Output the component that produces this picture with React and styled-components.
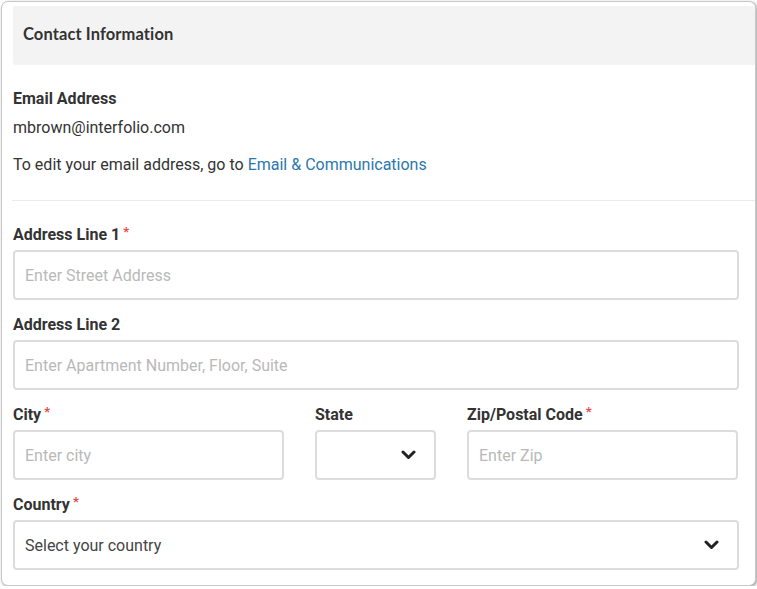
import React from 'react';
import styled, { createGlobalStyle } from 'styled-components';

const GlobalStyle = createGlobalStyle`
    html, body {
        margin: 0;
        padding: 0;
        background: #fff;
        font-family: Roboto, "Liberation Sans", sans-serif;
        color: #333;
    }
    * { box-sizing: border-box; }
`;

const Chevron = () => (
    <svg width="15" height="10" viewBox="0 0 15 10">
        <polyline points="2,2 7.5,7.5 13,2" fill="none" stroke="#222" strokeWidth="3" strokeLinecap="round" strokeLinejoin="round" />
    </svg>
);

const Field = ({ label, required, children, width }) => (
    <FieldWrap width={width}>
        <Label>
            {label}
            {required && <Star>*</Star>}
        </Label>
        {children}
    </FieldWrap>
);

const App = () => {
    return (
        <>
            <GlobalStyle />
            <Card>
                <Header>
                    <Title>Contact Information</Title>
                </Header>
                <EmailBlock>
                    <Label>Email Address</Label>
                    <EmailValue>mbrown@interfolio.com</EmailValue>
                    <Note>
                        To edit your email address, go to <Link href="#">Email &amp; Communications</Link>
                    </Note>
                </EmailBlock>
                <Divider />
                <Form>
                    <Field label="Address Line 1" required>
                        <Input placeholder="Enter Street Address" />
                    </Field>
                    <Field label="Address Line 2">
                        <Input placeholder="Enter Apartment Number, Floor, Suite" />
                    </Field>
                    <Row>
                        <Field label="City" required width="271px">
                            <Input placeholder="Enter city" />
                        </Field>
                        <Field label="State" width="121px">
                            <Select>
                                <span />
                                <Chevron />
                            </Select>
                        </Field>
                        <Field label="Zip/Postal Code" required width="271px">
                            <Input placeholder="Enter Zip" />
                        </Field>
                    </Row>
                    <Field label="Country" required>
                        <Select>
                            <SelectText>Select your country</SelectText>
                            <Chevron />
                        </Select>
                    </Field>
                </Form>
            </Card>
        </>
    );
};

export default App;

const Card = styled.div`
    margin: 1px 0 0 1px;
    width: 755px;
    height: 585px;
    border: 1px solid #c8c8c8;
    border-radius: 7px;
    box-shadow: 1px 1px 3px rgba(0, 0, 0, 0.4);
    padding: 4px 0 0 10px;
    overflow: hidden;
    background: #fff;
`;

const Header = styled.div`
    height: 59px;
    margin-left: 1px;
    background: #f3f3f3;
    border-radius: 0 0 0 3px;
    display: flex;
    align-items: center;
    padding: 0 0 3px 10px;
`;

const Title = styled.h2`
    margin: 0;
    font-family: Lato, "Open Sans", sans-serif;
    font-size: 16.5px;
    font-weight: 700;
    color: #333;
    letter-spacing: 0.1px;
`;

const EmailBlock = styled.div`
    padding: 24px 0 0 1px;
    height: 135px;
`;

const Label = styled.div`
    font-size: 16px;
    font-weight: 700;
    color: #333;
    line-height: 19px;
    height: 19px;
    display: flex;
    align-items: flex-start;
`;

const Star = styled.span`
    color: #e84848;
    font-size: 13px;
    margin-left: 3px;
    line-height: 13px;
`;

const EmailValue = styled.div`
    font-size: 16px;
    margin-top: 10px;
    line-height: 19px;
`;

const Note = styled.div`
    font-size: 16px;
    margin-top: 18px;
    line-height: 19px;
`;

const Link = styled.a`
    color: #2a78ad;
    text-decoration: none;
`;

const Divider = styled.div`
    height: 1px;
    background: #ebebeb;
`;

const Form = styled.div`
    padding: 24px 16px 0 1px;
    display: flex;
    flex-direction: column;
    gap: 15px;
`;

const FieldWrap = styled.div`
    display: flex;
    flex-direction: column;
    gap: 6px;
    width: ${p => p.width || 'auto'};
`;

const Row = styled.div`
    display: flex;
    gap: 31px;
`;

const Input = styled.input`
    height: 50px;
    width: 100%;
    border: 2px solid #dcdcdc;
    border-radius: 4px;
    padding: 0 10px;
    font-family: Roboto, "Liberation Sans", sans-serif;
    font-size: 16px;
    color: #333;
    outline: none;
    &::placeholder {
        color: #b9b9b9;
    }
`;

const Select = styled.div`
    height: 50px;
    width: 100%;
    border: 2px solid #dcdcdc;
    border-radius: 4px;
    padding: 0 18px 0 10px;
    display: flex;
    align-items: center;
    justify-content: space-between;
`;

const SelectText = styled.span`
    font-size: 16px;
    color: #444;
`;
